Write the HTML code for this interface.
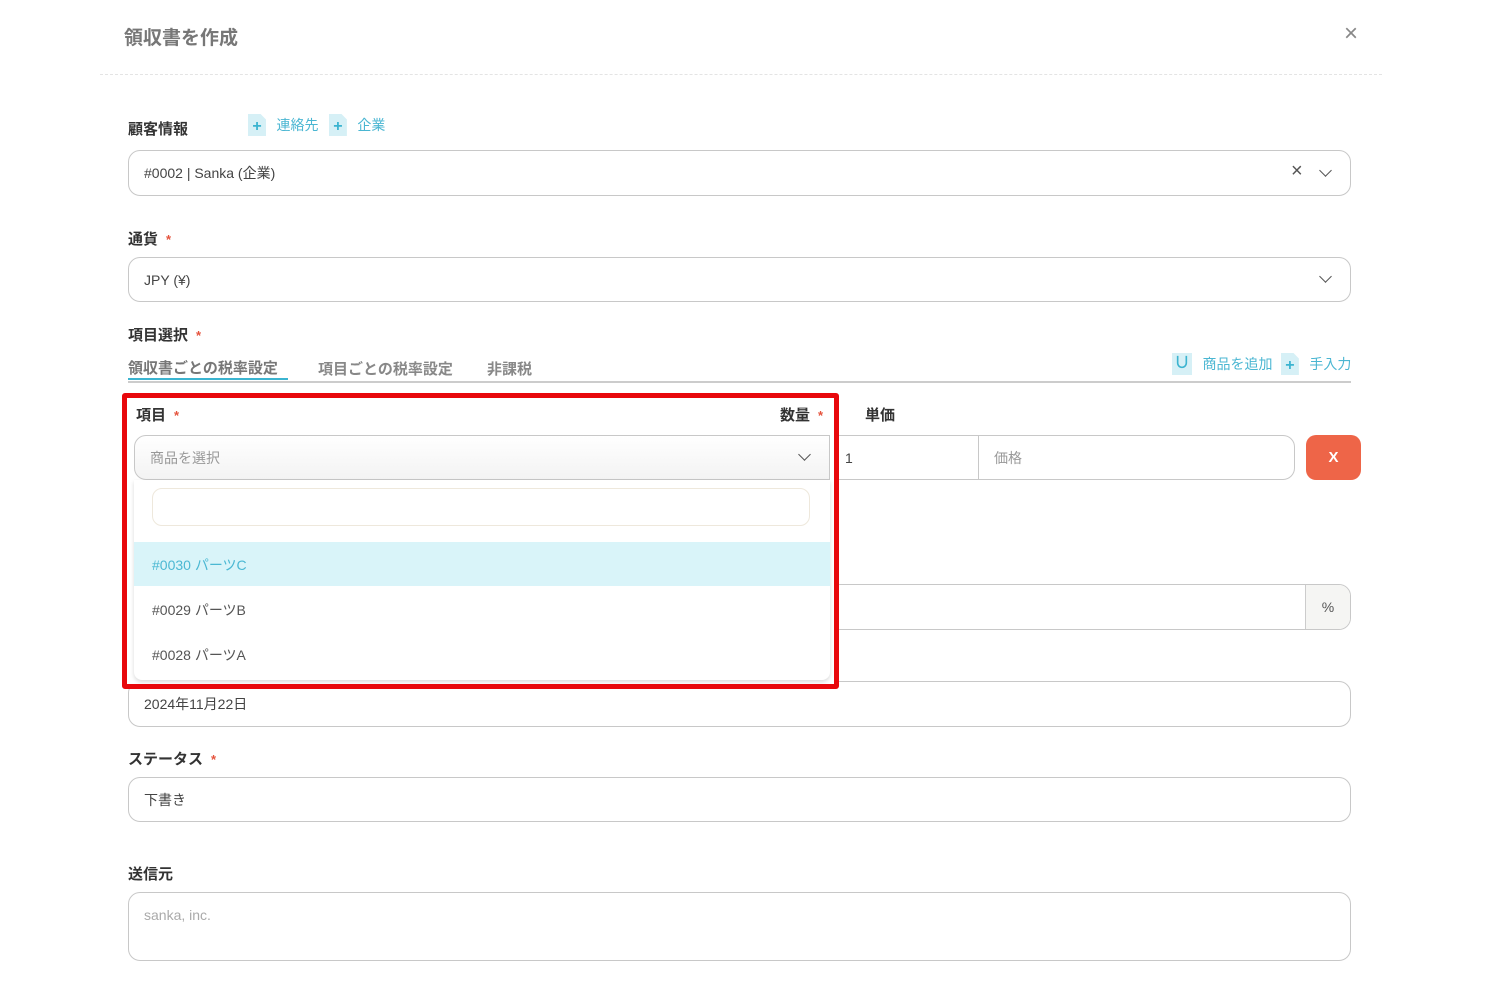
<!DOCTYPE html>
<html><head><meta charset="utf-8"><style>
*{box-sizing:border-box;margin:0;padding:0}
body{width:1500px;height:996px;background:#fff;position:relative;overflow:hidden;font-family:"Liberation Sans","Noto Sans CJK JP",sans-serif;color:#333}
.a{position:absolute}
.lbl{font-size:15px;font-weight:bold;color:#333}
.req{color:#e5533d;font-size:13px;margin-left:8px}
.inp{position:absolute;border:1.5px solid #c8c8c8;border-radius:12px;background:#fff;font-size:14px;color:#444;padding-left:15px;display:flex;align-items:center}
.chev{position:absolute;width:9px;height:9px;border-right:1.6px solid #555;border-bottom:1.6px solid #555;transform:rotate(45deg)}
.ic{display:inline-block;width:18px;height:22px;background:#d6f0f6;color:#3bb4d0;font-weight:bold;text-align:center;line-height:26px;font-size:16px;vertical-align:middle;clip-path:polygon(0 0,70% 0,100% 25%,100% 100%,0 100%)}
.link{color:#4ab6d2;font-size:14px;vertical-align:middle}
</style></head><body>
<div class="a" style="left:124px;top:23px;font-size:19px;color:#777;font-weight:bold">領収書を作成</div>
<div class="a" style="left:1344px;top:20px;font-size:24px;color:#888">×</div>
<div class="a" style="left:100px;top:74px;width:1282px;border-top:1px dashed #e4e4e4"></div>

<div class="a lbl" style="left:128px;top:118px">顧客情報</div>
<div class="a" style="left:248px;top:114px"><span class="ic">+</span> <span class="link" style="margin-left:6px">連絡先</span> <span class="ic" style="margin-left:6px">+</span> <span class="link" style="margin-left:6px">企業</span></div>
<div class="inp" style="left:128px;top:150px;width:1223px;height:46px">#0002 | Sanka (企業)</div>
<div class="a" style="left:1291px;top:160px;font-size:20px;color:#555">×</div>
<div class="chev" style="left:1321px;top:166px"></div>

<div class="a lbl" style="left:128px;top:228px">通貨<span class="req">*</span></div>
<div class="inp" style="left:128px;top:257px;width:1223px;height:45px">JPY (¥)</div>
<div class="chev" style="left:1321px;top:272px"></div>

<div class="a lbl" style="left:128px;top:324px">項目選択<span class="req">*</span></div>
<div class="a" style="left:128px;top:357px;font-size:15px;color:#777;font-weight:bold">領収書ごとの税率設定</div>
<div class="a" style="left:128px;top:378px;width:160px;height:2px;background:#3bb4d0"></div>
<div class="a" style="left:318px;top:358px;font-size:15px;color:#888;font-weight:bold">項目ごとの税率設定</div>
<div class="a" style="left:487px;top:358px;font-size:15px;color:#888;font-weight:bold">非課税</div>
<div class="a" style="left:128px;top:381px;width:1223px;height:1.5px;background:#ccc"></div>
<div class="a" style="left:1172px;top:353px"><span class="ic" style="clip-path:none;width:20px;line-height:22px">∪</span> <span class="link" style="margin-left:6px">商品を追加</span> <span class="ic" style="margin-left:4px">+</span> <span class="link" style="margin-left:6px">手入力</span></div>

<div class="a lbl" style="left:865px;top:404px">単価</div>
<div class="inp" style="left:829px;top:435px;width:150px;height:45px;border-radius:0">1</div>
<div class="inp" style="left:978px;top:435px;width:317px;height:45px;border-radius:0 12px 12px 0;color:#999">価格</div>
<div class="a" style="left:1306px;top:435px;width:55px;height:45px;border-radius:10px;background:#ee6548;color:#fff;font-weight:bold;font-size:15px;text-align:center;line-height:45px">X</div>

<div class="inp" style="left:128px;top:584px;width:1223px;height:46px"></div>
<div class="a" style="left:1305px;top:585px;width:45px;height:44px;background:#f5f5f3;border-left:1.5px solid #ccc;border-radius:0 11px 11px 0;text-align:center;line-height:44px;font-size:14px;color:#555">%</div>
<div class="inp" style="left:128px;top:681px;width:1223px;height:46px">2024年11月22日</div>

<div class="a lbl" style="left:128px;top:748px">ステータス<span class="req">*</span></div>
<div class="inp" style="left:128px;top:777px;width:1223px;height:45px">下書き</div>
<div class="a lbl" style="left:128px;top:863px">送信元</div>
<div class="inp" style="left:128px;top:892px;width:1223px;height:69px;align-items:flex-start;padding-top:14px;color:#aaa">sanka, inc.</div>

<div class="a" style="left:127px;top:396px;width:708px;height:290px;background:#fff"></div>
<div class="a lbl" style="left:136px;top:404px">項目<span class="req">*</span></div>
<div class="a lbl" style="left:780px;top:404px">数量<span class="req">*</span></div>
<div class="inp" style="left:134px;top:435px;width:696px;height:45px;background:linear-gradient(#fff,#f3f3f3);color:#999;border-radius:12px 0 0 12px">商品を選択</div>
<div class="chev" style="left:800px;top:450px"></div>
<div class="a" style="left:134px;top:480px;width:696px;height:200px;background:#fff;box-shadow:0 2px 4px rgba(0,0,0,.15);border-radius:0 0 8px 8px"></div>
<div class="a" style="left:152px;top:488px;width:658px;height:38px;border:1px solid #eee8dc;border-radius:10px"></div>
<div class="a" style="left:134px;top:542px;width:696px;height:44px;background:#d9f4f9"></div>
<div class="a" style="left:152px;top:555px;font-size:14px;color:#4bb8d3">#0030 パーツC</div>
<div class="a" style="left:152px;top:600px;font-size:14px;color:#555">#0029 パーツB</div>
<div class="a" style="left:152px;top:645px;font-size:14px;color:#555">#0028 パーツA</div>
<div class="a" style="left:122px;top:393px;width:717px;height:296px;border:5px solid #e8080c;border-radius:3px"></div>
</body></html>
